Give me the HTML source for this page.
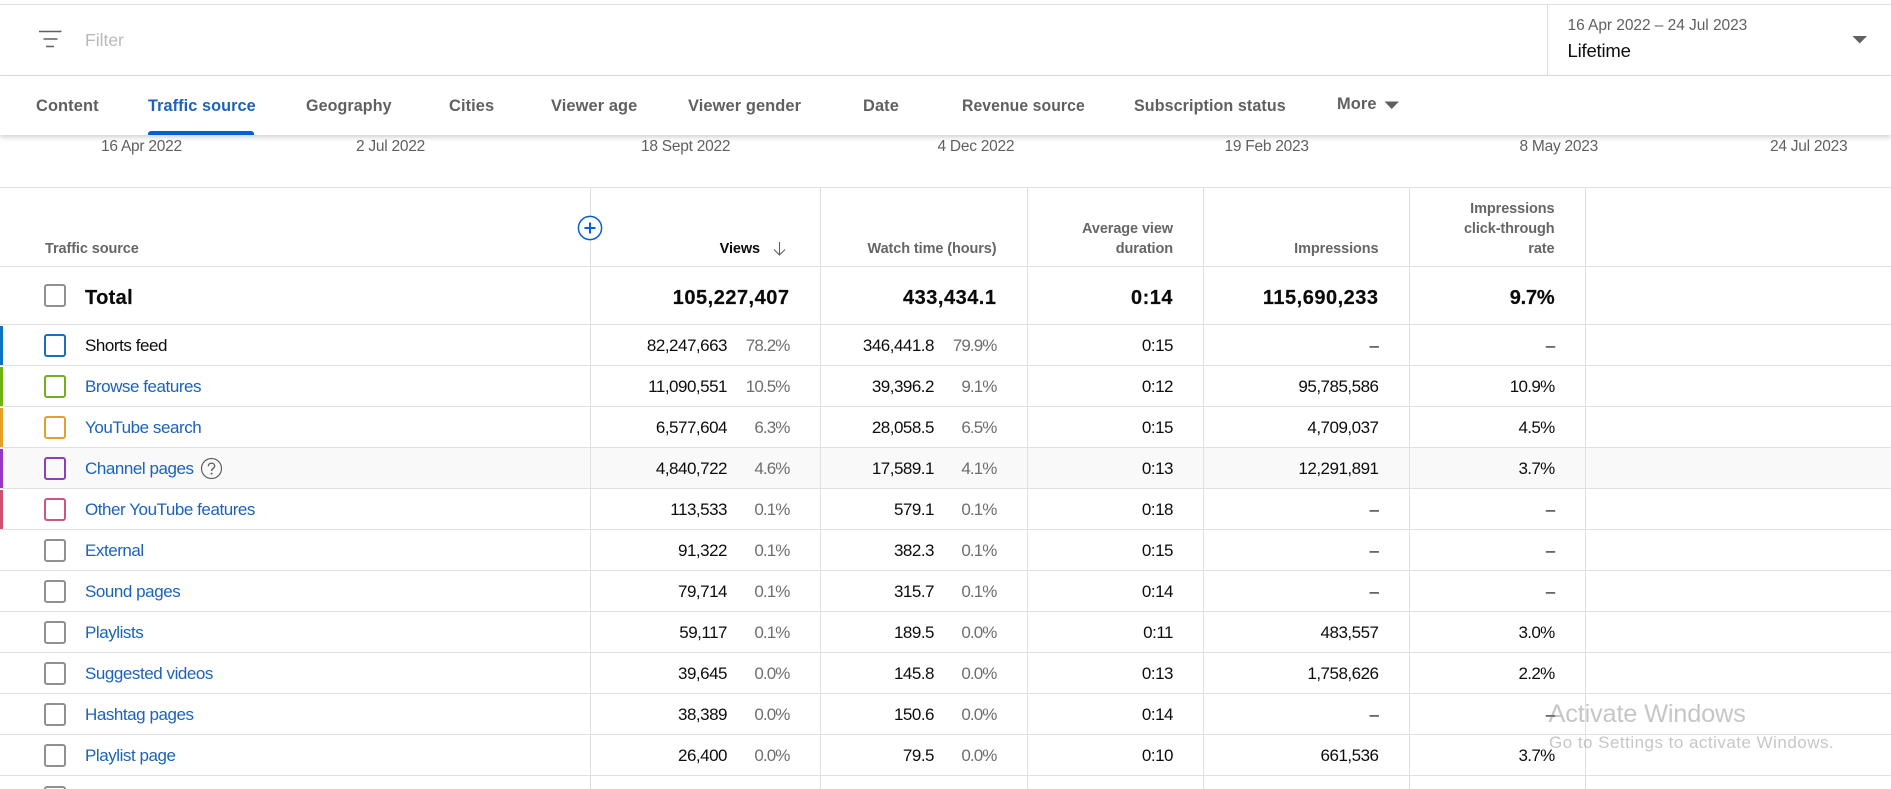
<!DOCTYPE html>
<html><head><meta charset="utf-8"><title>Traffic source</title>
<style>
*{box-sizing:border-box}
html,body{margin:0;padding:0;width:1891px;height:789px;overflow:hidden;background:#fff}
body{position:relative;font-family:"Liberation Sans",Arial,sans-serif;color:#0d0d0d}
.a{position:absolute;white-space:nowrap}
.hl{position:absolute;left:0;width:1891px;height:1px;background:#e0e0e0}
.vl{position:absolute;top:187px;height:602px;width:1px;background:#e0e0e0}
.tab{position:absolute;top:16px;line-height:28px;font-size:17px;font-weight:bold;color:#606060;white-space:nowrap;letter-spacing:.1px;transform-origin:0 50%;transform:scaleX(.965)}
.date{position:absolute;top:135.5px;line-height:21px;font-size:15.5px;color:#606060;white-space:nowrap;letter-spacing:-.25px}
.th{position:absolute;text-align:right;font-size:14.5px;font-weight:bold;color:#666;line-height:20px;white-space:nowrap;letter-spacing:-.1px}
.row{position:absolute;left:0;width:1891px;height:41px;line-height:41px;font-size:17px;letter-spacing:-.5px}
.row b,.row i,.row span{position:absolute;top:0;left:0;text-align:right;font-style:normal;font-weight:normal}
.row .n1{width:727px}.row .p1{width:789.5px;color:#6e6e6e;letter-spacing:-.9px}.row .n2{width:934px}.row .p2{width:996.5px;color:#6e6e6e;letter-spacing:-.9px}.row .d{width:1173px}.row .im{width:1378.5px}.row .c{width:1554.5px;letter-spacing:-.7px}
.row u{position:absolute;left:85px;top:0;text-decoration:none;color:#1b62bb;white-space:nowrap;letter-spacing:-.45px}
.row s{position:absolute;left:44px;top:9.5px;width:22px;height:23px;border:2px solid #909090;border-radius:3px;background:transparent}
.row em{position:absolute;left:0;top:1px;width:3px;height:40px}
.row.tot{font-size:20px;height:58px;line-height:64px;letter-spacing:.5px}
.row.tot b{font-weight:bold;color:#0a0a0a;letter-spacing:.5px;-webkit-text-stroke:.2px #0a0a0a}
.row.tot b.c{letter-spacing:-.2px}
.row.tot u{color:#0a0a0a;font-weight:bold;letter-spacing:.35px;-webkit-text-stroke:.2px #0a0a0a}
.row.tot s{top:18px}
</style></head><body>
<div class="hl" style="top:4px"></div>
<svg class="a" style="left:38px;top:29px" width="25" height="20" viewBox="0 0 25 20"><path d="M1 2.5H23.5M5.5 10H19.5M8 17.5H16" stroke="#606060" stroke-width="1.6" fill="none"/></svg>
<div class="a" style="left:85px;top:29px;line-height:22px;font-size:17.5px;color:#b9b9b9">Filter</div>
<div class="a" style="left:1547px;top:5px;width:1px;height:70px;background:#e0e0e0"></div>
<div class="a" style="left:1567.5px;top:16px;line-height:20px;font-size:15.5px;color:#606060;letter-spacing:-.05px">16 Apr 2022 – 24 Jul 2023</div>
<div class="a" style="left:1567.5px;top:39px;line-height:24px;font-size:18.5px;color:#0d0d0d;letter-spacing:-.2px">Lifetime</div>
<svg class="a" style="left:1852px;top:35px" width="16" height="10"><path d="M.5 1H15L7.7 8.5Z" fill="#606060"/></svg>
<div class="hl" style="top:75px"></div>

<div class="a" style="left:0;top:76px;width:1891px;height:59px;background:#fff;box-shadow:0 2px 5px rgba(0,0,0,.2);z-index:2">
<div class="tab" style="left:35.5px">Content</div>
<div class="tab" style="left:148px;color:#1b62bb;transform:scaleX(.955)">Traffic source</div>
<div class="tab" style="left:306px;transform:scaleX(.945)">Geography</div>
<div class="tab" style="left:449px">Cities</div>
<div class="tab" style="left:551px">Viewer age</div>
<div class="tab" style="left:688px">Viewer gender</div>
<div class="tab" style="left:863px">Date</div>
<div class="tab" style="left:961.5px;transform:scaleX(.925)">Revenue source</div>
<div class="tab" style="left:1134px;transform:scaleX(.945)">Subscription status</div>
<div class="tab" style="left:1337px;top:14px">More</div>
<svg class="a" style="left:1384px;top:25px" width="16" height="9"><path d="M.5 .5H15L7.7 8Z" fill="#606060"/></svg>
<div class="a" style="left:148px;top:55px;width:106px;height:4px;background:#065fd4;border-radius:3px 3px 0 0"></div>
</div>

<div class="date" style="left:101px">16 Apr 2022</div>
<div class="date" style="left:356px">2 Jul 2022</div>
<div class="date" style="left:641px">18 Sept 2022</div>
<div class="date" style="left:937.5px">4 Dec 2022</div>
<div class="date" style="left:1224.5px">19 Feb 2023</div>
<div class="date" style="left:1519.5px">8 May 2023</div>
<div class="date" style="left:1770px">24 Jul 2023</div>

<div class="a" style="left:0;top:448px;width:1891px;height:40px;background:#f9f9f9"></div>

<div class="hl" style="top:187px"></div>
<div class="hl" style="top:266px"></div>
<div class="vl" style="left:590px"></div>
<div class="vl" style="left:820px"></div>
<div class="vl" style="left:1027px"></div>
<div class="vl" style="left:1203px"></div>
<div class="vl" style="left:1409px"></div>
<div class="vl" style="left:1585px"></div>

<div class="th" style="left:45px;top:238.5px">Traffic source</div>
<svg class="a" style="left:577px;top:215px;z-index:1" width="26" height="26" viewBox="0 0 26 26"><circle cx="13" cy="13" r="11.6" fill="#fff" stroke="#065fd4" stroke-width="1.5"/><path d="M13 7.5V18.5M7.5 13H18.5" stroke="#065fd4" stroke-width="2"/></svg>
<div class="th" style="left:0;width:760px;top:238.5px;color:#0d0d0d">Views</div>
<svg class="a" style="left:772px;top:241px" width="15" height="15" viewBox="0 0 15 15"><path d="M7.5 1V14M2 8.5L7.5 14L13 8.5" stroke="#606060" stroke-width="1.1" fill="none"/></svg>
<div class="th" style="left:0;width:996.5px;top:238.5px">Watch time (hours)</div>
<div class="th" style="left:0;width:1173px;top:218.5px">Average view<br>duration</div>
<div class="th" style="left:0;width:1378.5px;top:238.5px">Impressions</div>
<div class="th" style="left:0;width:1554.5px;top:198.5px">Impressions<br>click-through<br>rate</div>

<div class="row tot" style="top:266px"><s></s><u>Total</u><b class="p1">105,227,407</b><b class="p2">433,434.1</b><b class="d">0:14</b><b class="im">115,690,233</b><b class="c">9.7%</b></div>
<div class="hl" style="top:324px"></div>

<div class="row" style="top:324.5px"><em style="background:#0b72c4"></em><s style="border-color:#1a6fb5"></s><u style="color:#0d0d0d">Shorts feed</u><span class="n1">82,247,663</span><span class="p1">78.2%</span><span class="n2">346,441.8</span><span class="p2">79.9%</span><span class="d">0:15</span><span class="im">–</span><span class="c">–</span></div>
<div class="hl" style="top:365px"></div>

<div class="row" style="top:365.5px"><em style="background:#6fb313"></em><s style="border-color:#72ae1e"></s><u>Browse features</u><span class="n1">11,090,551</span><span class="p1">10.5%</span><span class="n2">39,396.2</span><span class="p2">9.1%</span><span class="d">0:12</span><span class="im">95,785,586</span><span class="c">10.9%</span></div>
<div class="hl" style="top:406px"></div>

<div class="row" style="top:406.5px"><em style="background:#e5a123"></em><s style="border-color:#e0a22f"></s><u>YouTube search</u><span class="n1">6,577,604</span><span class="p1">6.3%</span><span class="n2">28,058.5</span><span class="p2">6.5%</span><span class="d">0:15</span><span class="im">4,709,037</span><span class="c">4.5%</span></div>
<div class="hl" style="top:447px"></div>

<div class="row" style="top:447.5px"><em style="background:#9736c6"></em><s style="border-color:#8f3fb5"></s><u>Channel pages</u><span class="n1">4,840,722</span><span class="p1">4.6%</span><span class="n2">17,589.1</span><span class="p2">4.1%</span><span class="d">0:13</span><span class="im">12,291,891</span><span class="c">3.7%</span></div>
<svg class="a" style="left:200px;top:457px" width="23" height="23" viewBox="0 0 23 23"><circle cx="11.5" cy="11.5" r="10" fill="none" stroke="#606060" stroke-width="1.2"/><path d="M8.3 9.2C8.3 7.3 9.7 6.2 11.5 6.2C13.3 6.2 14.7 7.4 14.7 9C14.7 11.3 11.6 11.4 11.6 14" fill="none" stroke="#606060" stroke-width="1.4"/><circle cx="11.6" cy="16.6" r="1" fill="#606060"/></svg>
<div class="hl" style="top:488px"></div>

<div class="row" style="top:488.5px"><em style="background:#d2506f"></em><s style="border-color:#c9587a"></s><u>Other YouTube features</u><span class="n1">113,533</span><span class="p1">0.1%</span><span class="n2">579.1</span><span class="p2">0.1%</span><span class="d">0:18</span><span class="im">–</span><span class="c">–</span></div>
<div class="hl" style="top:529px"></div>

<div class="row" style="top:529.5px"><s></s><u>External</u><span class="n1">91,322</span><span class="p1">0.1%</span><span class="n2">382.3</span><span class="p2">0.1%</span><span class="d">0:15</span><span class="im">–</span><span class="c">–</span></div>
<div class="hl" style="top:570px"></div>

<div class="row" style="top:570.5px"><s></s><u>Sound pages</u><span class="n1">79,714</span><span class="p1">0.1%</span><span class="n2">315.7</span><span class="p2">0.1%</span><span class="d">0:14</span><span class="im">–</span><span class="c">–</span></div>
<div class="hl" style="top:611px"></div>

<div class="row" style="top:611.5px"><s></s><u>Playlists</u><span class="n1">59,117</span><span class="p1">0.1%</span><span class="n2">189.5</span><span class="p2">0.0%</span><span class="d">0:11</span><span class="im">483,557</span><span class="c">3.0%</span></div>
<div class="hl" style="top:652px"></div>

<div class="row" style="top:652.5px"><s></s><u>Suggested videos</u><span class="n1">39,645</span><span class="p1">0.0%</span><span class="n2">145.8</span><span class="p2">0.0%</span><span class="d">0:13</span><span class="im">1,758,626</span><span class="c">2.2%</span></div>
<div class="hl" style="top:693px"></div>

<div class="row" style="top:693.5px"><s></s><u>Hashtag pages</u><span class="n1">38,389</span><span class="p1">0.0%</span><span class="n2">150.6</span><span class="p2">0.0%</span><span class="d">0:14</span><span class="im">–</span><span class="c">–</span></div>
<div class="hl" style="top:734px"></div>

<div class="row" style="top:734.5px"><s></s><u>Playlist page</u><span class="n1">26,400</span><span class="p1">0.0%</span><span class="n2">79.5</span><span class="p2">0.0%</span><span class="d">0:10</span><span class="im">661,536</span><span class="c">3.7%</span></div>
<div class="hl" style="top:775px"></div>
<div class="a" style="left:44px;top:785.5px;width:22px;height:12px;border:2px solid #909090;border-radius:3px"></div>

<div class="a" style="left:1548.5px;top:698px;line-height:32px;font-size:25.4px;color:rgba(120,120,120,.42);z-index:5;letter-spacing:-.2px">Activate Windows</div>
<div class="a" style="left:1549px;top:732px;line-height:22px;font-size:17px;color:rgba(120,120,120,.42);z-index:5;letter-spacing:.48px">Go to Settings to activate Windows.</div>
</body></html>
